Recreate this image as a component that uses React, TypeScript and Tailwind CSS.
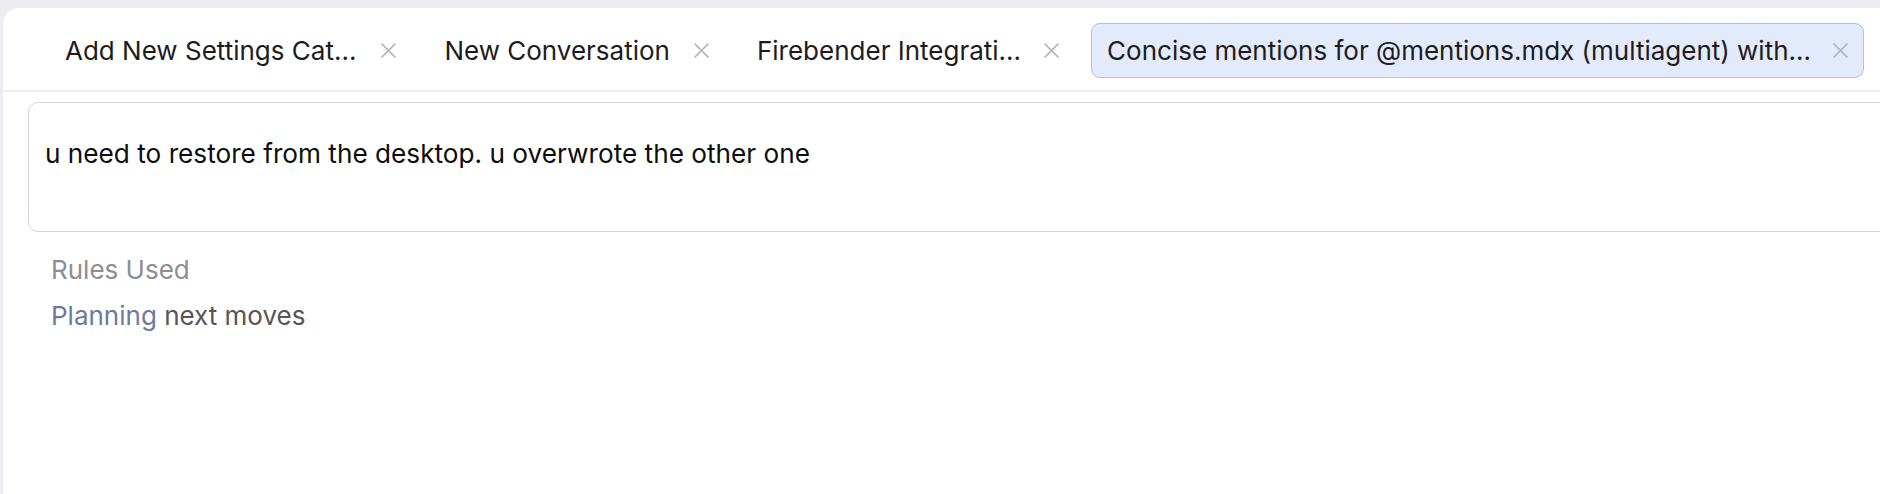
const tabs = [
    { title: 'Add New Settings Cat...', active: false, gap: 'gap-[25px]' },
    { title: 'New Conversation', active: false, gap: 'gap-[24px]' },
    { title: 'Firebender Integrati...', active: false, gap: 'gap-[23px]' },
    { title: 'Concise mentions for @mentions.mdx (multiagent) with...', active: true, gap: 'gap-[22px]' },
];

const CloseIcon = () => (
    <svg width="15" height="15" viewBox="0 0 15 15" fill="none" className="shrink-0">
        <path d="M1 1L14 14M14 1L1 14" stroke="#afafc2" strokeWidth="1.6" strokeLinecap="round" />
    </svg>
);

const Tab = ({ title, active, gap }: { title: string; active: boolean; gap: string }) => (
    <div
        className={
            active
                ? `flex h-[55px] items-center ${gap} rounded-[9px] border border-[#a9c0f3] bg-[#e3eafb] px-[15px]`
                : `flex h-[55px] items-center ${gap} rounded-[9px] border border-transparent px-[15px]`
        }
    >
        <span className="whitespace-nowrap text-[26px] leading-none text-[#1c1c1e]">{title}</span>
        <CloseIcon />
    </div>
);

export default function App() {
    return (
        <div className="h-[494px] w-full overflow-hidden bg-[#ececf1] pl-[3px] pt-2 font-['Inter',sans-serif]">
            <div className="h-full rounded-tl-[16px] bg-white">
                {/* tab strip */}
                <div className="flex h-[82px] items-start gap-4 pl-[46px] pt-[15px]">
                    {tabs.map((t) => (
                        <Tab key={t.title} title={t.title} active={t.active} gap={t.gap} />
                    ))}
                </div>
                <div className="h-[2px] bg-[#eeeef2]" />

                {/* message box */}
                <div className="-mr-8 pl-[25px] pt-[10px]">
                    <div className="h-[130px] rounded-[10px] border border-[#d4d4dc] pl-[16px] pt-[31px]">
                        <p className="text-[26.2px] leading-[40px] text-[#0d0d0d]">
                            u need to restore from the desktop. u overwrote the other one
                        </p>
                    </div>
                </div>

                {/* status */}
                <div className="pl-[48px] pt-[18px] text-[26px] leading-[40px]">
                    <div className="text-[#8e8e92]">Rules Used</div>
                    <div className="mt-[6px] text-[#55555a]">
                        <span className="text-[#6b7b9b]">Planning</span> next moves
                    </div>
                </div>
            </div>
        </div>
    );
}
